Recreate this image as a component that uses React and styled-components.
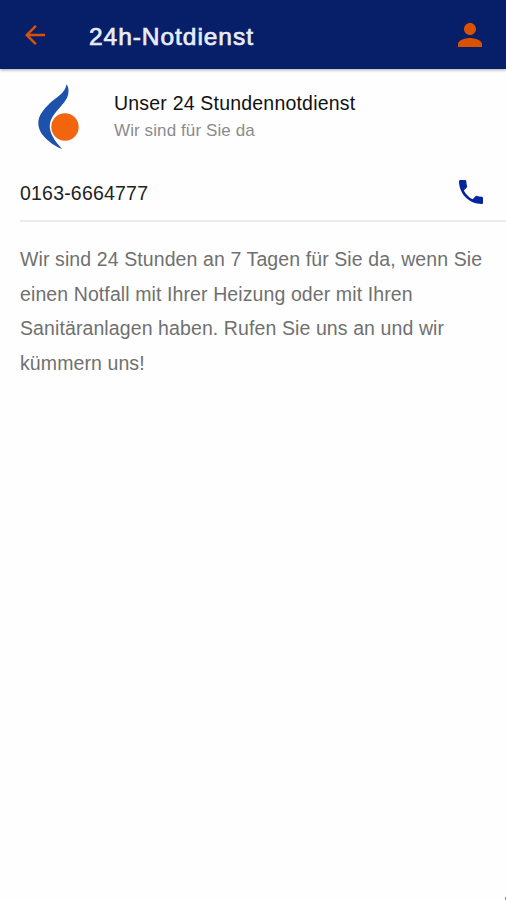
import React from 'react';
import styled, { createGlobalStyle } from 'styled-components';
import { MdArrowBack, MdPerson } from 'react-icons/md';

const GlobalStyle = createGlobalStyle`
  body {
    margin: 0;
    background: #fefefe;
    font-family: "Liberation Sans", Arial, sans-serif;
  }
`;

const Page = styled.div`
  display: flex;
  flex-direction: column;
  height: 100vh;
  overflow: hidden;
`;

const Header = styled.header`
  display: flex;
  align-items: center;
  box-sizing: border-box;
  flex: none;
  height: 69px;
  padding: 0 18px 0 20px;
  background: #071e68;
  color: #d95204;
  box-shadow: 0 1px 3px rgba(0, 0, 0, 0.35);
`;

const IconButton = styled.button`
  display: flex;
  padding: 0;
  border: 0;
  background: none;
  color: ${props => props.color || 'inherit'};
  cursor: pointer;
`;

const Title = styled.h1`
  flex: 1;
  margin: 5px 0 0 39px;
  color: #e9edfa;
  font-size: 24.5px;
  font-weight: normal;
  letter-spacing: 0.95px;
  line-height: 30px;
  -webkit-text-stroke: 0.7px #e9edfa;
`;

const Company = styled.section`
  display: flex;
  padding: 12px 20px 0 34px;
`;

const Logo = styled.svg`
  flex: none;
  width: 50px;
  height: 70px;
`;

const CompanyText = styled.div`
  margin: 9px 0 0 30px;
`;

const Name = styled.h2`
  margin: 0;
  color: #111;
  font-size: 19.5px;
  font-weight: normal;
  letter-spacing: 0.2px;
  line-height: 27px;
`;

const Slogan = styled.p`
  margin: 0;
  color: #8b8b8b;
  font-size: 17px;
  letter-spacing: 0.1px;
  line-height: 27px;
`;

const PhoneRow = styled.div`
  display: flex;
  align-items: center;
  justify-content: space-between;
  box-sizing: border-box;
  height: 58px;
  margin: 13px 0 0 20px;
  padding-right: 19px;
  border-bottom: 2px solid #ebebeb;
`;

const Number = styled.span`
  padding-top: 2px;
  color: #222;
  font-size: 19.5px;
  letter-spacing: 0.2px;
`;

const Handset = styled.svg`
  width: 32px;
  height: 32px;
  fill: currentColor;
`;

const Description = styled.p`
  margin: 20px 0 0 20px;
  width: 475px;
  color: #707070;
  font-size: 19.5px;
  letter-spacing: 0.1px;
  line-height: 34.6px;
`;

const Corner = styled.div`
  width: 1px;
  height: 3px;
  margin: auto 0 0 auto;
  background: #8d8790;
`;

const App = () => (
  <Page>
    <GlobalStyle />
    <Header>
      <IconButton aria-label="Zurück"><MdArrowBack size={30} /></IconButton>
      <Title>24h-Notdienst</Title>
      <IconButton aria-label="Profil"><MdPerson size={36} /></IconButton>
    </Header>
    <Company>
      <Logo viewBox="0 0 50 70">
        <path
          d="M32.6 3.3C34.6 6 35 10 34 14C32.3 21 23.5 28 19 35C14 43 15.5 50 19 56C21.5 60.5 24 63.5 28 68C23 66 18.5 63.5 14.7 60C9 55.500 4.300 49.500 4.300 42C4.300 34.500 9.500 28.500 16 22C23 16 30.800 12.500 32.600 3.300Z"
          fill="#1c52ab"
        />
        <circle cx="31" cy="46" r="13.7" fill="#f2650f" />
      </Logo>
      <CompanyText>
        <Name>Unser 24 Stundennotdienst</Name>
        <Slogan>Wir sind für Sie da</Slogan>
      </CompanyText>
    </Company>
    <PhoneRow>
      <Number>0163-6664777</Number>
      <IconButton color="#06249b" aria-label="Anrufen">
        <Handset viewBox="0 0 24 24">
          <path d="M6.62 10.79c1.44 2.83 3.76 5.14 6.59 6.59l2.2-2.2c.27-.27.67-.36 1.02-.24 1.12.37 2.33.57 3.57.57.55 0 1 .45 1 1V20c0 .55-.45 1-1 1-9.39 0-17-7.61-17-17 0-.55.45-1 1-1h3.5c.55 0 1 .45 1 1 0 1.25.2 2.45.57 3.57.11.35.03.74-.25 1.02l-2.2 2.2z" />
        </Handset>
      </IconButton>
    </PhoneRow>
    <Description>
      Wir sind 24 Stunden an 7 Tagen für Sie da, wenn Sie einen Notfall mit
      Ihrer Heizung oder mit Ihren Sanitäranlagen haben. Rufen Sie uns an und
      wir kümmern uns!
    </Description>
    <Corner />
  </Page>
);

export default App;
